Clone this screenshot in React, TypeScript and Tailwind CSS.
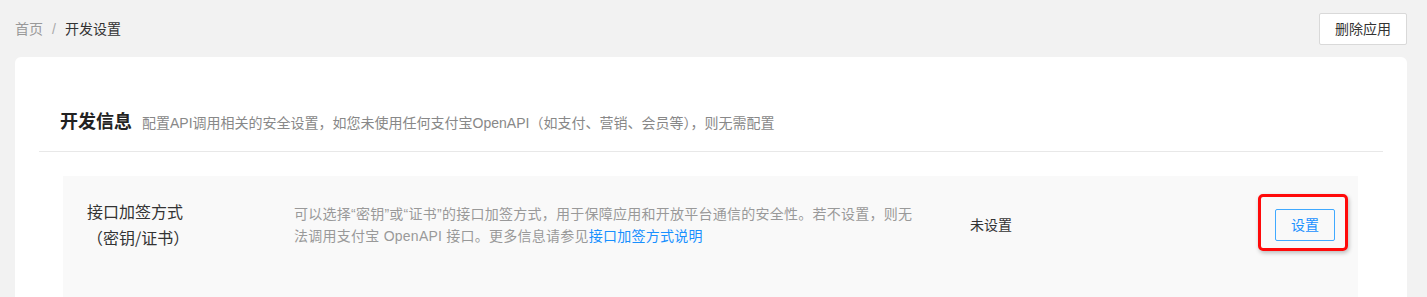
import React from "react";

const font = "font-['Liberation_Sans','Noto_Sans_CJK_SC',sans-serif]";

function Breadcrumb() {
  return (
    <div className="flex items-center text-[14px]">
      <span className="text-[#999]">首页</span>
      <span className="mx-[9px] text-[#aaa]">/</span>
      <span className="text-[#333]">开发设置</span>
    </div>
  );
}

function SignRow() {
  return (
    <div className="flex items-center bg-[#f9f9f9] pl-[24px] pr-[23px] pt-[25px] pb-[60px]">
      {/* 左侧标题 */}
      <div className="w-[207px] shrink-0">
        <div className="w-[96px] text-center text-[16px] leading-[24px] text-[#333]">
          <div>接口加签方式</div>
          <div className="font-['Noto_Sans_CJK_SC',sans-serif]">（密钥/证书）</div>
        </div>
      </div>
      {/* 说明 */}
      <div className="w-[620px] shrink-0 text-[14px] leading-[22px] tracking-[0.25px] text-[#999]">
        可以选择“密钥”或“证书”的接口加签方式，用于保障应用和开放平台通信的安全性。若不设置，则无法调用支付宝 OpenAPI 接口。更多信息请参见
        <a className="text-[#1890ff]">接口加签方式说明</a>
      </div>
      <div className="ml-[56px] text-[14px] text-[#333]">未设置</div>
      <div className="relative ml-auto">
        {/* 标注红框 */}
        <div className="pointer-events-none absolute -left-[17px] -right-[13px] -top-[15px] -bottom-[10px] rounded-[5px] border-[3px] border-[#ff0a0a] shadow-[1px_2px_4px_rgba(0,0,0,0.25)]" />
        <button className="h-[32px] w-[60px] rounded-[2px] border border-[#40a9ff] text-[14px] text-[#1890ff]">
          设置
        </button>
      </div>
    </div>
  );
}

export default function App() {
  return (
    <div className={`min-h-[297px] bg-[#f2f2f2] pl-[15px] pr-[20px] pt-[13px] ${font}`}>
      <div className="flex items-center justify-between">
        <Breadcrumb />
        <button className="h-[32px] w-[88px] rounded-[2px] border border-[#d9d9d9] bg-white text-[14px] text-[#333]">
          删除应用
        </button>
      </div>

      <div className="mt-[12px] rounded-t-[6px] bg-white px-[24px] pt-[51px]">
        <div className="flex items-baseline border-b border-[#e8e8e8] pb-[15px] pl-[21px]">
          <span className="text-[18px] leading-[28px] font-semibold text-[#222]">开发信息</span>
          <span className="ml-[10px] text-[14px] text-[#888]">
            配置API调用相关的安全设置，如您未使用任何支付宝OpenAPI（如支付、营销、会员等），则无需配置
          </span>
        </div>
        <div className="pt-[24px] pl-[24px] pr-[25px]">
          <SignRow />
        </div>
      </div>
    </div>
  );
}
